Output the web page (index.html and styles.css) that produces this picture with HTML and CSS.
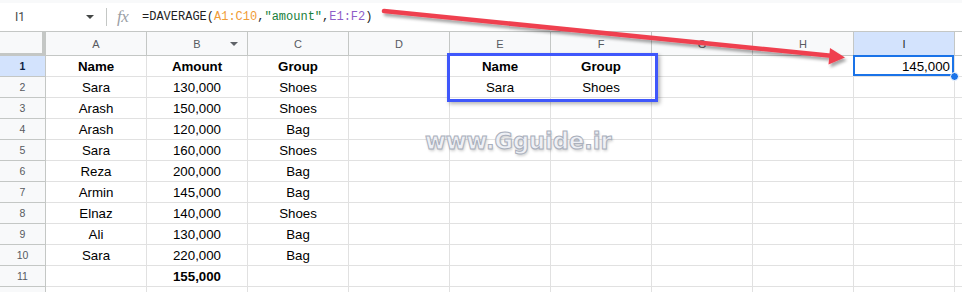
FILE: index.html
```html
<!DOCTYPE html>
<html>
<head>
<meta charset="utf-8">
<link rel="stylesheet" href="styles.css">
</head>
<body>
<div class="page">
  <div class="fbar">
    <div class="namebox"><span class="ref">I1</span><span class="caret"></span></div>
    <div class="sep"></div>
    <div class="fx">fx</div>
    <div class="formula">=DAVERAGE(<span class="r1">A1:C10</span>,<span class="str">"amount"</span>,<span class="r2">E1:F2</span>)</div>
  </div>
  <div class="sheet">
    <div class="corner"></div>
    <div class="ch">A</div><div class="ch chb">B<span class="filt"></span></div><div class="ch">C</div><div class="ch">D</div><div class="ch">E</div><div class="ch">F</div><div class="ch">G</div><div class="ch">H</div><div class="ch sel">I</div><div class="ch tail"></div>

    <div class="rh sel">1</div><div class="c b">Name</div><div class="c b">Amount</div><div class="c b">Group</div><div class="c"></div><div class="c b">Name</div><div class="c b">Group</div><div class="c"></div><div class="c"></div><div class="c num active">145,000</div><div class="c tail"></div>
    <div class="rh">2</div><div class="c">Sara</div><div class="c">130,000</div><div class="c">Shoes</div><div class="c"></div><div class="c">Sara</div><div class="c">Shoes</div><div class="c"></div><div class="c"></div><div class="c"></div><div class="c tail"></div>
    <div class="rh">3</div><div class="c">Arash</div><div class="c">150,000</div><div class="c">Shoes</div><div class="c"></div><div class="c"></div><div class="c"></div><div class="c"></div><div class="c"></div><div class="c"></div><div class="c tail"></div>
    <div class="rh">4</div><div class="c">Arash</div><div class="c">120,000</div><div class="c">Bag</div><div class="c"></div><div class="c"></div><div class="c"></div><div class="c"></div><div class="c"></div><div class="c"></div><div class="c tail"></div>
    <div class="rh">5</div><div class="c">Sara</div><div class="c">160,000</div><div class="c">Shoes</div><div class="c"></div><div class="c"></div><div class="c"></div><div class="c"></div><div class="c"></div><div class="c"></div><div class="c tail"></div>
    <div class="rh">6</div><div class="c">Reza</div><div class="c">200,000</div><div class="c">Bag</div><div class="c"></div><div class="c"></div><div class="c"></div><div class="c"></div><div class="c"></div><div class="c"></div><div class="c tail"></div>
    <div class="rh">7</div><div class="c">Armin</div><div class="c">145,000</div><div class="c">Bag</div><div class="c"></div><div class="c"></div><div class="c"></div><div class="c"></div><div class="c"></div><div class="c"></div><div class="c tail"></div>
    <div class="rh">8</div><div class="c">Elnaz</div><div class="c">140,000</div><div class="c">Shoes</div><div class="c"></div><div class="c"></div><div class="c"></div><div class="c"></div><div class="c"></div><div class="c"></div><div class="c tail"></div>
    <div class="rh">9</div><div class="c">Ali</div><div class="c">130,000</div><div class="c">Bag</div><div class="c"></div><div class="c"></div><div class="c"></div><div class="c"></div><div class="c"></div><div class="c"></div><div class="c tail"></div>
    <div class="rh">10</div><div class="c">Sara</div><div class="c">220,000</div><div class="c">Bag</div><div class="c"></div><div class="c"></div><div class="c"></div><div class="c"></div><div class="c"></div><div class="c"></div><div class="c tail"></div>
    <div class="rh">11</div><div class="c"></div><div class="c b">155,000</div><div class="c"></div><div class="c"></div><div class="c"></div><div class="c"></div><div class="c"></div><div class="c"></div><div class="c"></div><div class="c tail"></div>
    <div class="rh"></div><div class="c"></div><div class="c"></div><div class="c"></div><div class="c"></div><div class="c"></div><div class="c"></div><div class="c"></div><div class="c"></div><div class="c"></div><div class="c tail"></div>
  </div>

  <div class="critbox"></div>
  <div class="watermark">www.Gguide.ir</div>
  <svg class="arrow" width="962" height="292" viewBox="0 0 962 292">
    <defs>
      <filter id="sh" x="-10%" y="-50%" width="120%" height="200%">
        <feDropShadow dx="2" dy="3" stdDeviation="1.6" flood-color="#000" flood-opacity="0.35"/>
      </filter>
    </defs>
    <g filter="url(#sh)">
      <line x1="384" y1="11" x2="831" y2="55.8" stroke="#ef4150" stroke-width="4.5" stroke-linecap="round"/>
      <polygon points="845,57.6 828.5,64.5 830,48" fill="#ef4150"/>
    </g>
  </svg>
</div>
</body>
</html>
```
FILE: styles.css
```css
html, body {
  margin: 0;
  padding: 0;
  background: #fff;
}
.page {
  position: relative;
  width: 962px;
  height: 292px;
  overflow: hidden;
  font-family: "Liberation Sans", Arial, sans-serif;
}
.fbar {
  box-sizing: border-box;
  height: 32px;
  border-top: 3px solid #f8f9fa;
  border-bottom: 1px solid #c4c7c5;
  display: flex;
  align-items: center;
}
.namebox {
  width: 106px;
  display: flex;
  align-items: center;
  justify-content: space-between;
  padding-left: 15px;
  padding-right: 12px;
  box-sizing: border-box;
}
.ref {
  font-size: 12px;
  color: #444746;
  font-family: Roboto, "Liberation Sans", sans-serif;
}
.caret {
  width: 0;
  height: 0;
  border-left: 4px solid transparent;
  border-right: 4px solid transparent;
  border-top: 4px solid #444746;
}
.sep {
  width: 1px;
  height: 18px;
  background: #c4c7c5;
}
.fx {
  font-family: "Liberation Serif", serif;
  font-style: italic;
  font-size: 17px;
  color: #9aa0a6;
  margin-left: 10px;
  width: 25px;
  letter-spacing: -0.5px;
}
.formula {
  font-family: "Liberation Mono", monospace;
  font-size: 12px;
  color: #1f1f1f;
}
.r1 { color: #f09c37; }
.str { color: #18803c; }
.r2 { color: #8e5ec8; }

.sheet {
  display: grid;
  grid-template-columns: 46px repeat(9, 101px) 8px;
  grid-template-rows: 24px repeat(11, 21px) 21px;
}
.sheet > div {
  box-sizing: border-box;
  border-right: 1px solid #e1e1e1;
  border-bottom: 1px solid #e1e1e1;
  display: flex;
  align-items: center;
  justify-content: center;
  font-size: 13.3px;
  color: #000;
}
.sheet > .corner {
  background: #f8f9fa;
  border-right: 4px solid #c4c7c5;
  border-bottom: 3px solid #c4c7c5;
}
.sheet > .ch {
  background: #f8f9fa;
  border-right: 1px solid #c4c7c5;
  border-bottom: 1px solid #c4c7c5;
  font-size: 11px;
  color: #575a5f;
  position: relative;
}
.sheet > .ch.tail {
  background: #fff;
  border-right: none;
}
.sheet > .rh {
  background: #f8f9fa;
  border-right: 1px solid #c4c7c5;
  border-bottom: 1px solid #c4c7c5;
  font-size: 10.5px;
  color: #575a5f;
}
.sheet > .sel {
  background: #d3e3fd;
  color: #0b1f44;
  font-weight: bold;
}
.sheet > .ch.sel {
  font-weight: normal;
  color: #1f1f1f;
}
.filt {
  position: absolute;
  right: 9px;
  top: 10px;
  width: 0;
  height: 0;
  border-left: 4px solid transparent;
  border-right: 4px solid transparent;
  border-top: 4px solid #5f6368;
}
.sheet > .b {
  font-weight: bold;
}
.sheet > .tail {
  border-right: none;
}
.sheet > .num {
  justify-content: flex-end;
  padding-right: 4px;
}
.sheet > .active {
  position: relative;
}
.active::after {
  content: "";
  position: absolute;
  left: -1px;
  top: -1px;
  right: 0;
  bottom: 0;
  border: 2px solid #1a73e8;
}
.active::before {
  content: "";
  position: absolute;
  right: -5px;
  bottom: -5px;
  width: 7px;
  height: 7px;
  border-radius: 50%;
  background: #1a73e8;
  border: 1px solid #fff;
  z-index: 2;
}
.critbox {
  position: absolute;
  left: 447px;
  top: 53px;
  width: 211px;
  height: 49px;
  box-sizing: border-box;
  border: 3px solid #3f57fb;
  box-shadow: 2px 2px 4px rgba(0,0,0,0.3);
}
.watermark {
  position: absolute;
  left: 425px;
  top: 128px;
  font-family: "DejaVu Sans", Verdana, sans-serif;
  font-weight: bold;
  font-size: 22.5px;
  color: #eef0f5;
  -webkit-text-stroke: 1px #a9afbc;
  text-shadow: 1px 2px 3px rgba(0,0,0,0.2);
}
.arrow {
  position: absolute;
  left: 0;
  top: 0;
  pointer-events: none;
}
```
